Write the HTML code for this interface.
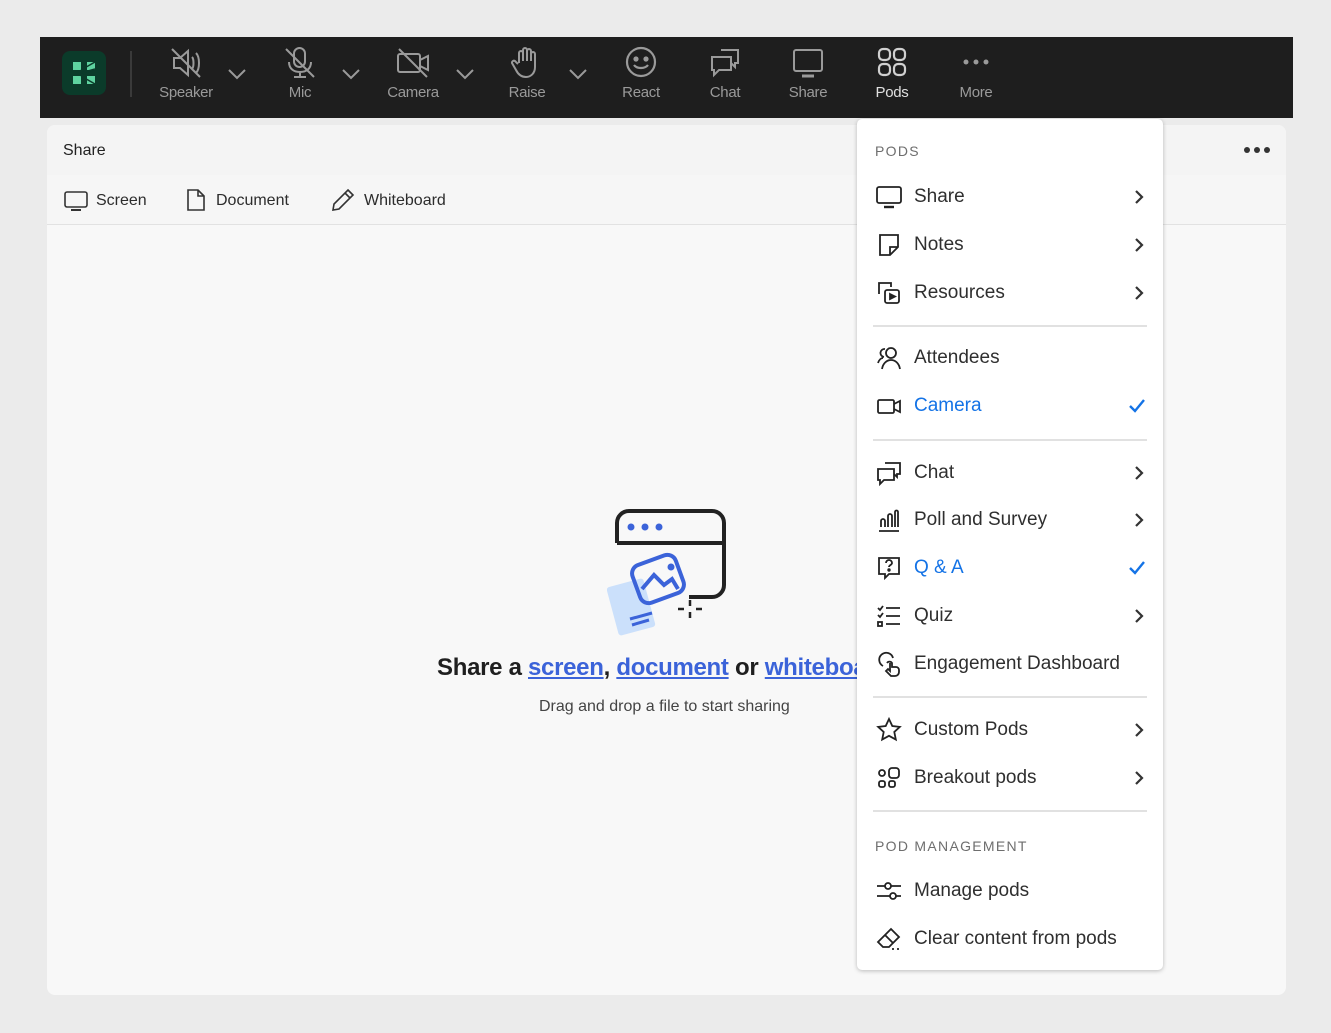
<!DOCTYPE html>
<html><head><meta charset="utf-8"><style>
*{margin:0;padding:0;box-sizing:border-box}
body{width:1331px;height:1033px;background:#ebebeb;font-family:"Liberation Sans",sans-serif;position:relative;overflow:hidden}
.abs{position:absolute}
#bar{left:40px;top:37px;width:1253px;height:81px;background:#1e1e1e}
.tb{position:absolute;top:0;width:80px;text-align:center;color:#9a9a9a;font-size:15px}
.tb svg{position:absolute;left:22px;top:8px}
.tb span{position:absolute;top:47px;left:0;width:80px;letter-spacing:-0.3px}
.chev{position:absolute;top:26px}
#panel{left:47px;top:125px;width:1239px;height:870px;background:#f8f8f8;border-radius:8px;overflow:hidden}
#hdr{left:0;top:0;width:1239px;height:50px;background:#f4f4f4}
#tabs{left:0;top:50px;width:1239px;height:50px;background:#f6f6f6;border-bottom:1px solid #e2e2e2}
.tab{position:absolute;top:17px;font-size:16px;color:#2c2c2c}
#menu{left:857px;top:119px;width:306px;height:851px;background:#fff;border-radius:5px;box-shadow:0 1px 4px rgba(0,0,0,.25)}
.mi{position:absolute;left:57px;font-size:19px;color:#2f2f2f;transform:translateY(-50%);white-space:nowrap}
.mi.b{color:#1473e6}
.ic{position:absolute;left:19px;width:26px;height:26px;transform:translateY(-50%)}
.ar{position:absolute;left:276px;transform:translateY(-50%)}
.sec{position:absolute;left:18px;font-size:14px;letter-spacing:1.3px;color:#6e6e6e;transform:translateY(-50%)}
.dv{position:absolute;left:16px;width:274px;height:2px;background:#e1e1e1}
a{color:#3b63d9;text-decoration:underline}
</style></head><body>
<div id="bar" class="abs">
 <div class="abs" style="left:22px;top:14px;width:44px;height:44px;border-radius:8px;background:#0b3b2a">
  <svg width="44" height="44" viewBox="0 0 44 44"><rect x="11" y="11" width="8" height="8" fill="#5fd3a0"/><rect x="25" y="25" width="8" height="8" fill="#5fd3a0"/><rect x="11" y="25" width="8" height="8" fill="#5fd3a0"/><rect x="25" y="11" width="8" height="8" fill="#5fd3a0"/><path d="M19 19L33 11M19 25L33 33M19 22L33 18" stroke="#0b3b2a" stroke-width="1.5"/></svg>
 </div>
 <div class="abs" style="left:90px;top:14px;width:2px;height:46px;background:#3a3a3a"></div>
 <div class="tb" style="left:106px"><svg width="36" height="36" viewBox="0 0 36 36" fill="none" stroke="#9a9a9a" stroke-width="2"><path d="M6 13h6l8-7v24l-8-7H6z"/><path d="M24 12c2 2 2 10 0 12M28 8c4 4 4 16 0 20"/><path d="M4 4l28 28"/></svg><span>Speaker</span></div>
 <svg class="chev" style="left:186px" width="22" height="22" viewBox="0 0 22 22" fill="none" stroke="#9a9a9a" stroke-width="2"><path d="M3 7l8 8 8-8"/></svg>
 <div class="tb" style="left:220px"><svg width="36" height="36" viewBox="0 0 36 36" fill="none" stroke="#9a9a9a" stroke-width="2"><rect x="12" y="3" width="11" height="19" rx="5.5"/><path d="M7 17c0 7 5 10 11 10s11-3 11-10M18 27v5M12 32h12M4 4l28 28"/></svg><span>Mic</span></div>
 <svg class="chev" style="left:300px" width="22" height="22" viewBox="0 0 22 22" fill="none" stroke="#9a9a9a" stroke-width="2"><path d="M3 7l8 8 8-8"/></svg>
 <div class="tb" style="left:333px"><svg width="36" height="36" viewBox="0 0 36 36" fill="none" stroke="#9a9a9a" stroke-width="2"><rect x="3" y="9" width="22" height="18" rx="2"/><path d="M25 15l8-4v14l-8-4M4 4l28 28"/></svg><span>Camera</span></div>
 <svg class="chev" style="left:414px" width="22" height="22" viewBox="0 0 22 22" fill="none" stroke="#9a9a9a" stroke-width="2"><path d="M3 7l8 8 8-8"/></svg>
 <div class="tb" style="left:447px"><svg width="36" height="36" viewBox="0 0 36 36" fill="none" stroke="#9a9a9a" stroke-width="2"><path d="M10 18V8a2 2 0 014 0v8V5a2 2 0 014 0v11V6a2 2 0 014 0v10V9a2 2 0 014 0v13c0 6-4 10-9 10s-8-3-10-7l-4-7a2 2 0 013-2l3 3"/></svg><span>Raise</span></div>
 <svg class="chev" style="left:527px" width="22" height="22" viewBox="0 0 22 22" fill="none" stroke="#9a9a9a" stroke-width="2"><path d="M3 7l8 8 8-8"/></svg>
 <div class="tb" style="left:561px"><svg width="36" height="36" viewBox="0 0 36 36" fill="none" stroke="#9a9a9a" stroke-width="2.2"><circle cx="18" cy="17" r="14"/><circle cx="13" cy="14" r="1.5" fill="#9a9a9a"/><circle cx="23" cy="14" r="1.5" fill="#9a9a9a"/><path d="M11 20c3 4 11 4 14 0"/></svg><span>React</span></div>
 <div class="tb" style="left:645px"><svg width="36" height="36" viewBox="0 0 36 36" fill="none" stroke="#9a9a9a" stroke-width="2"><path d="M14 5h17v13h-3v4l-4-4"/><path d="M5 12h19v13H12l-5 5v-5H5z"/></svg><span>Chat</span></div>
 <div class="tb" style="left:728px"><svg width="36" height="36" viewBox="0 0 36 36" fill="none" stroke="#9a9a9a" stroke-width="2"><rect x="4" y="5" width="28" height="21" rx="2"/><path d="M12 31h12" stroke-width="3"/></svg><span>Share</span></div>
 <div class="tb" style="left:812px;color:#e0e0e0"><svg width="36" height="36" viewBox="0 0 36 36" fill="none" stroke="#d0d0d0" stroke-width="2.2"><rect x="5" y="4" width="11" height="11" rx="4"/><rect x="20" y="4" width="11" height="11" rx="4"/><rect x="5" y="19" width="11" height="11" rx="4"/><rect x="20" y="19" width="11" height="11" rx="4"/></svg><span>Pods</span></div>
 <div class="tb" style="left:896px"><svg width="36" height="36" viewBox="0 0 36 36" fill="#9a9a9a"><circle cx="8" cy="17" r="2.5"/><circle cx="18" cy="17" r="2.5"/><circle cx="28" cy="17" r="2.5"/></svg><span>More</span></div>
</div>

<div id="panel" class="abs">
 <div id="hdr" class="abs"><div class="abs" style="left:16px;top:17px;font-size:16px;color:#222">Share</div>
  <svg class="abs" style="left:1196px;top:20px" width="28" height="10" viewBox="0 0 28 10" fill="#333"><circle cx="4" cy="5" r="3"/><circle cx="14" cy="5" r="3"/><circle cx="24" cy="5" r="3"/></svg></div>
 <div id="tabs" class="abs">
  <svg class="abs" style="left:17px;top:15px" width="24" height="22" viewBox="0 0 24 22" fill="none" stroke="#333" stroke-width="1.6"><rect x="1" y="2" width="22" height="15" rx="2"/><path d="M7 20h10" stroke-width="2"/></svg>
  <div class="tab" style="left:49px">Screen</div>
  <svg class="abs" style="left:139px;top:13px" width="20" height="24" viewBox="0 0 20 24" fill="none" stroke="#333" stroke-width="1.6"><path d="M2 2h10l6 6v14H2z M12 2v6h6"/></svg>
  <div class="tab" style="left:169px">Document</div>
  <svg class="abs" style="left:284px;top:13px" width="24" height="24" viewBox="0 0 24 24" fill="none" stroke="#333" stroke-width="1.6"><path d="M17 2l5 5L8 21l-6 1 1-6z M14 5l5 5"/></svg>
  <div class="tab" style="left:317px">Whiteboard</div>
 </div>
 <svg class="abs" style="left:560px;top:382px" width="125" height="130" viewBox="0 0 125 130" fill="none">
  <path d="M10 36V16a12 12 0 0112-12h83a12 12 0 0112 12v62a12 12 0 01-12 12H82" stroke="#222" stroke-width="4"/>
  <path d="M10 36h107" stroke="#222" stroke-width="4"/>
  <circle cx="24" cy="20" r="3.5" fill="#3b63d9"/><circle cx="38" cy="20" r="3.5" fill="#3b63d9"/><circle cx="52" cy="20" r="3.5" fill="#3b63d9"/>
  <rect x="5" y="75" width="38" height="50" rx="3" fill="#cbe0fb" transform="rotate(-15 24 100)"/>
  <path d="M23 112l22-6M25 118l17-5" stroke="#3b63d9" stroke-width="3"/>
  <rect x="28" y="52" width="46" height="40" rx="9" stroke="#3b63d9" stroke-width="4" fill="none" transform="rotate(-20 51 72)"/>
  <path d="M35 82l12-14 10 10 8-6 6 10" stroke="#3b63d9" stroke-width="4"/>
  <circle cx="64" cy="60" r="3.5" fill="#3b63d9"/>
  <path d="M83 99v-6M83 105v6M77 102h-6M89 102h6" stroke="#222" stroke-width="2.5"/>
 </svg>
 <div class="abs" style="left:390px;top:529px;font-size:24px;color:#1f1f1f;white-space:nowrap;font-weight:600;letter-spacing:-0.3px">Share a <a>screen</a>, <a>document</a> or <a>whiteboard</a></div>
 <div class="abs" style="left:492px;top:573px;font-size:16px;color:#444">Drag and drop a file to start sharing</div>
</div>

<div id="menu" class="abs">
 <div class="sec" style="top:32px">PODS</div>
 <svg class="ic" style="top:78px" viewBox="0 0 26 26" fill="none" stroke="#222" stroke-width="1.8"><rect x="1" y="3" width="24" height="16" rx="2"/><path d="M8 23h10" stroke-width="2.4"/></svg>
 <div class="mi" style="top:78px">Share</div><svg class="ar" style="top:78px" width="12" height="16" viewBox="0 0 12 16" fill="none" stroke="#333" stroke-width="2.2"><path d="M3 2l6 6-6 6"/></svg>
 <svg class="ic" style="top:126px" viewBox="0 0 26 26" fill="none" stroke="#222" stroke-width="1.8"><path d="M4 3h18v12l-8 8H4z M22 15h-8v8"/></svg>
 <div class="mi" style="top:126px">Notes</div><svg class="ar" style="top:126px" width="12" height="16" viewBox="0 0 12 16" fill="none" stroke="#333" stroke-width="2.2"><path d="M3 2l6 6-6 6"/></svg>
 <svg class="ic" style="top:174px" viewBox="0 0 26 26" fill="none" stroke="#222" stroke-width="1.8"><path d="M3 14V3h12v4"/><rect x="9" y="10" width="14" height="13" rx="2"/><path d="M14 14l5 2.5-5 2.5z" fill="#222"/></svg>
 <div class="mi" style="top:174px">Resources</div><svg class="ar" style="top:174px" width="12" height="16" viewBox="0 0 12 16" fill="none" stroke="#333" stroke-width="2.2"><path d="M3 2l6 6-6 6"/></svg>
 <div class="dv" style="top:206px"></div>
 <svg class="ic" style="top:239px" viewBox="0 0 26 26" fill="none" stroke="#222" stroke-width="1.8"><circle cx="15" cy="8" r="5"/><path d="M6 24c1-6 5-9 9-9s8 3 9 9M9 4a4 4 0 00-1 8M2 18c1-3 3-5 5-5"/></svg>
 <div class="mi" style="top:239px">Attendees</div>
 <svg class="ic" style="top:287px" viewBox="0 0 26 26" fill="none" stroke="#222" stroke-width="1.8"><rect x="2" y="7" width="16" height="13" rx="1.5"/><path d="M18 11l6-3v11l-6-3"/></svg>
 <div class="mi b" style="top:287px">Camera</div><svg class="ar" style="top:287px;left:271px" width="18" height="16" viewBox="0 0 18 16" fill="none" stroke="#1473e6" stroke-width="2.4"><path d="M2 8l5 5L16 2"/></svg>
 <div class="dv" style="top:320px"></div>
 <svg class="ic" style="top:354px" viewBox="0 0 26 26" fill="none" stroke="#222" stroke-width="1.8"><path d="M9 3h15v11h-3v3l-3-3"/><path d="M2 9h16v11H8l-4 4v-4H2z"/></svg>
 <div class="mi" style="top:354px">Chat</div><svg class="ar" style="top:354px" width="12" height="16" viewBox="0 0 12 16" fill="none" stroke="#333" stroke-width="2.2"><path d="M3 2l6 6-6 6"/></svg>
 <svg class="ic" style="top:401px" viewBox="0 0 26 26" fill="none" stroke="#222" stroke-width="1.8"><path d="M3 24h20M5 20v-6a2 2 0 014 0v6M12 20V9a2 2 0 014 0v11M19 20V5a1.5 1.5 0 013 0v15"/></svg>
 <div class="mi" style="top:401px">Poll and Survey</div><svg class="ar" style="top:401px" width="12" height="16" viewBox="0 0 12 16" fill="none" stroke="#333" stroke-width="2.2"><path d="M3 2l6 6-6 6"/></svg>
 <svg class="ic" style="top:449px" viewBox="0 0 26 26" fill="none" stroke="#222" stroke-width="1.8"><path d="M3 3h20v16H13l-4 4v-4H3z"/><path d="M10 8a3 3 0 116 0c0 2-3 2-3 4"/><circle cx="13" cy="15" r=".8" fill="#222"/></svg>
 <div class="mi b" style="top:449px">Q &amp; A</div><svg class="ar" style="top:449px;left:271px" width="18" height="16" viewBox="0 0 18 16" fill="none" stroke="#1473e6" stroke-width="2.4"><path d="M2 8l5 5L16 2"/></svg>
 <svg class="ic" style="top:497px" viewBox="0 0 26 26" fill="none" stroke="#222" stroke-width="1.8"><path d="M2 5l2 2 3-4M2 12l2 2 3-4M10 5h14M10 13h14M10 21h14"/><rect x="2" y="19" width="4" height="4"/></svg>
 <div class="mi" style="top:497px">Quiz</div><svg class="ar" style="top:497px" width="12" height="16" viewBox="0 0 12 16" fill="none" stroke="#333" stroke-width="2.2"><path d="M3 2l6 6-6 6"/></svg>
 <svg class="ic" style="top:545px" viewBox="0 0 26 26" fill="none" stroke="#222" stroke-width="1.8"><path d="M7 15a7 7 0 1110-8"/><path d="M11 12a3 3 0 015 0v4h4a3 3 0 013 3v2a4 4 0 01-4 4h-4l-5-5 2-2 2 2v-8"/></svg>
 <div class="mi" style="top:545px">Engagement Dashboard</div>
 <div class="dv" style="top:577px"></div>
 <svg class="ic" style="top:611px" viewBox="0 0 26 26" fill="none" stroke="#222" stroke-width="1.8"><path d="M13 2l3.3 7 7.5.9-5.5 5.1 1.5 7.5L13 18.8 6.2 22.5l1.5-7.5L2.2 9.9 9.7 9z"/></svg>
 <div class="mi" style="top:611px">Custom Pods</div><svg class="ar" style="top:611px" width="12" height="16" viewBox="0 0 12 16" fill="none" stroke="#333" stroke-width="2.2"><path d="M3 2l6 6-6 6"/></svg>
 <svg class="ic" style="top:659px" viewBox="0 0 26 26" fill="none" stroke="#222" stroke-width="1.8"><circle cx="6" cy="8" r="3"/><rect x="13" y="3" width="10" height="10" rx="3"/><rect x="3" y="16" width="6" height="6" rx="2"/><rect x="13" y="16" width="6" height="6" rx="2"/></svg>
 <div class="mi" style="top:659px">Breakout pods</div><svg class="ar" style="top:659px" width="12" height="16" viewBox="0 0 12 16" fill="none" stroke="#333" stroke-width="2.2"><path d="M3 2l6 6-6 6"/></svg>
 <div class="dv" style="top:691px"></div>
 <div class="sec" style="top:727px">POD MANAGEMENT</div>
 <svg class="ic" style="top:772px" viewBox="0 0 26 26" fill="none" stroke="#222" stroke-width="1.8"><path d="M1 8h8M15 8h10M1 18h13M20 18h5"/><circle cx="12" cy="8" r="3"/><circle cx="17" cy="18" r="3"/></svg>
 <div class="mi" style="top:772px">Manage pods</div>
 <svg class="ic" style="top:820px" viewBox="0 0 26 26" fill="none" stroke="#222" stroke-width="1.8"><path d="M15 3l8 8-10 10H7l-5-5z M9 9l8 8M16 23h2M21 23h2"/></svg>
 <div class="mi" style="top:820px">Clear content from pods</div>
</div>
</body></html>
